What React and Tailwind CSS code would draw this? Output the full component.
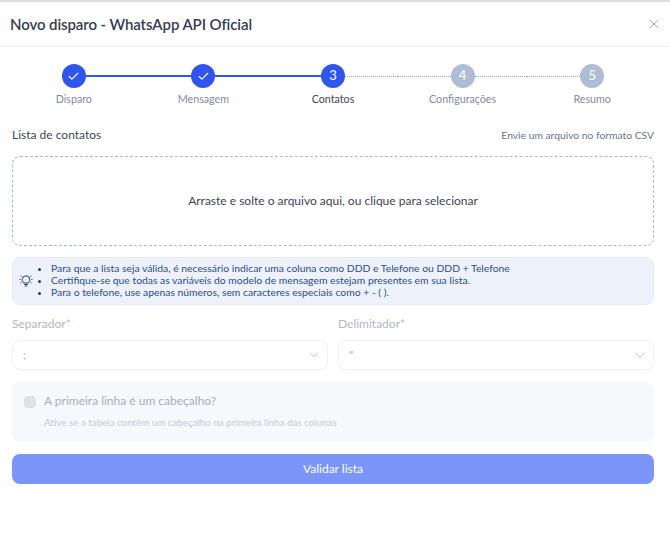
import { Check, ChevronDown, X } from "lucide-react";

const steps = [
  { label: "Disparo", state: "done" },
  { label: "Mensagem", state: "done" },
  { label: "Contatos", state: "current", number: 3 },
  { label: "Configurações", state: "todo", number: 4 },
  { label: "Resumo", state: "todo", number: 5 },
];

function Connector({ kind }) {
  if (kind === "none") return <div className="flex-1" />;
  if (kind === "solid") return <div className="h-0.5 flex-1 bg-[#2f55ee]" />;
  return <div className="h-0 flex-1 border-t border-dotted border-[#8fa3c4]" />;
}

function Step({ step, index }) {
  const active = step.state !== "todo";
  const left = index === 0 ? "none" : active ? "solid" : "dotted";
  const right = index === steps.length - 1 ? "none" : step.state === "done" ? "solid" : "dotted";
  return (
    <div className="flex flex-col items-center">
      <div className="flex w-full items-center">
        <Connector kind={left} />
        <div
          className={
            active
              ? "flex h-6 w-6 items-center justify-center rounded-full bg-[#2f55ee] text-[13px] text-white"
              : "flex h-6 w-6 items-center justify-center rounded-full bg-[#aebdd6] text-[13px] text-white"
          }
        >
          {step.state === "done" ? <Check size={13} strokeWidth={2} /> : step.number}
        </div>
        <Connector kind={right} />
      </div>
      <span
        className={
          step.state === "current"
            ? "mt-[3px] text-[10.7px] leading-[16px] text-[#3f4254]"
            : "mt-[3px] text-[10.7px] leading-[16px] text-[#7e8aa5]"
        }
      >
        {step.label}
      </span>
    </div>
  );
}

function BulbIcon() {
  return (
    <svg width="16" height="16" viewBox="0 0 16 16" fill="none" stroke="#1f3f78" strokeWidth="1" className="shrink-0">
      <path d="M5.6 10c-.2-1-1.4-1.7-1.4-3.4a3.8 3.8 0 0 1 7.6 0c0 1.7-1.2 2.4-1.4 3.4z" />
      <path d="M6.2 11.5h3.6M6.8 13h2.4" />
      <path d="M1.5 6.5h1.2M13.3 6.5h1.2M2.6 2.8l1 .8M13.4 2.8l-1 .8M2.6 10.2l1-.8M13.4 10.2l-1-.8" />
    </svg>
  );
}

function SelectField({ label, value }) {
  return (
    <div className="flex flex-1 flex-col">
      <span className="text-[12px] leading-[18px] text-[#b3b6c0]">
        {label}
        <span className="text-[#f0a8b0]">*</span>
      </span>
      <div className="mt-[7px] flex h-[30px] items-center justify-between rounded-lg border border-[#eef0f6] pl-[10px] pr-[5px] text-[11px] text-[#a9adb9]">
        <span>{value}</span>
        <ChevronDown size={16} strokeWidth={1.5} className="text-[#c3c9d6]" />
      </div>
    </div>
  );
}

export default function App() {
  return (
    <div className="h-[540px] w-[670px] overflow-hidden border-t-2 border-[#dedede] bg-white font-['Lato',sans-serif]">
      <header className="flex h-[45px] items-center justify-between border-b border-[#e9eff7] pl-[10px] pr-[9px]">
        <h1 className="text-[15px] font-semibold tracking-[-0.1px] text-[#363b52]">
          Novo disparo - WhatsApp API Oficial
        </h1>
        <X size={14} strokeWidth={1.5} className="text-[#8a93a6]" />
      </header>

      <div className="grid grid-cols-5 pl-[9px] pr-[13px] pt-[17px]">
        {steps.map((step, index) => (
          <Step key={step.label} step={step} index={index} />
        ))}
      </div>

      <div className="flex flex-col pl-3 pr-4 pt-[19px]">
        <div className="flex items-center justify-between">
          <span className="text-[12px] leading-[18px] text-[#41465a]">Lista de contatos</span>
          <span className="text-[10.3px] leading-[18px] text-[#66738e]">
            Envie um arquivo no formato CSV
          </span>
        </div>

        <div className="mt-3 flex h-[90px] items-center justify-center rounded-lg border border-dashed border-[#a5b8d6] text-[12px] text-[#3f4254]">
          Arraste e solte o arquivo aqui, ou clique para selecionar
        </div>

        <div className="mt-[11px] flex h-[48px] items-center rounded-lg border border-[#e4ebf7] bg-[#edf1fa] pl-[5px] text-[#2a4d8f]">
          <BulbIcon />
          <ul className="ml-[7px] list-disc pl-[10px] text-[10.35px] leading-[11.7px] marker:text-[#1f3f78]">
            <li>Para que a lista seja válida, é necessário indicar uma coluna como DDD e Telefone ou DDD + Telefone</li>
            <li>Certifique-se que todas as variáveis do modelo de mensagem estejam presentes em sua lista.</li>
            <li>Para o telefone, use apenas números, sem caracteres especiais como + - ( ).</li>
          </ul>
        </div>

        <div className="mt-[10px] flex gap-[10px]">
          <SelectField label="Separador" value=";" />
          <SelectField label="Delimitador" value={'"'} />
        </div>

        <div className="mt-3 flex h-[60px] flex-col justify-center rounded-lg bg-[#f7f8fc] pb-[2px] pl-[12px]">
          <div className="flex items-center gap-[8px]">
            <div className="mt-[2px] h-3 w-3 rounded-[4px] bg-[#e0e0e5]" />
            <span className="text-[12px] text-[#a9adb9]">A primeira linha é um cabeçalho?</span>
          </div>
          <span className="ml-[20px] mt-[5px] text-[9.8px] text-[#c5c9d4]">
            Ative se a tabela contém um cabeçalho na primeira linha das colunas
          </span>
        </div>

        <button className="mt-3 h-[30px] rounded-lg bg-[#7a94f8] text-[12px] text-white">
          Validar lista
        </button>
      </div>
    </div>
  );
}
